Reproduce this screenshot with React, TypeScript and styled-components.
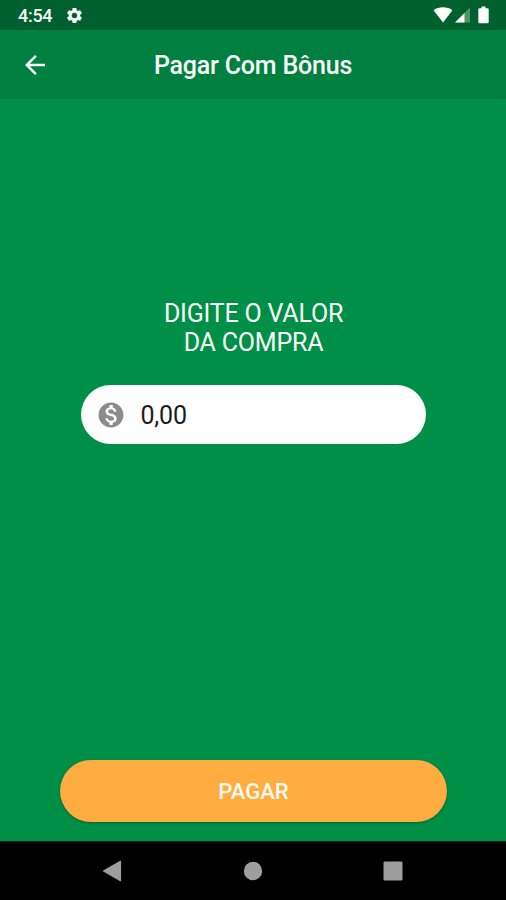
import React, { useState } from 'react';
import styled, { createGlobalStyle } from 'styled-components';
import { MdArrowBack, MdMonetizationOn, MdSettings } from 'react-icons/md';

const GlobalStyle = createGlobalStyle`
  *, *::before, *::after { box-sizing: border-box; }
  body { margin: 0; font-family: Roboto, "Liberation Sans", sans-serif; }
`;

const Screen = styled.div`
  display: flex;
  flex-direction: column;
  width: 506px;
  height: 900px;
  overflow: hidden;
  background: #008f47;
  color: #fafff8;
`;

const StatusBar = styled.div`
  display: flex;
  align-items: center;
  justify-content: space-between;
  height: 30px;
  padding: 2px 17px 0 18px;
  background: #00602f;
`;

const StatusGroup = styled.div`
  display: flex;
  align-items: center;
  gap: 13px;

  svg { display: block; margin-bottom: 2px; }
`;

const SystemIcons = styled.div`
  display: flex;
  align-items: center;
  padding-bottom: 2px;

  svg { display: block; margin-left: 2px; }
  svg:last-child { margin-left: 8px; }
`;

const Clock = styled.span`
  font-size: 18px;
  line-height: 22px;
  font-weight: 500;
  letter-spacing: -0.3px;
`;

const AppBar = styled.header`
  display: grid;
  grid-template-columns: 70px 1fr 70px;
  align-items: center;
  height: 69px;
  padding-top: 1px;
  border-bottom: 1px solid #007c3d;
  background: #008040;
`;

const BackButton = styled.button`
  display: flex;
  margin: 0;
  padding: 0 0 0 20px;
  border: 0;
  background: none;
  color: inherit;
`;

const Title = styled.h1`
  margin: 0;
  padding-top: 3px;
  text-align: center;
  white-space: nowrap;
  font-size: 25px;
  line-height: 30px;
  font-weight: 500;
  letter-spacing: -0.2px;
`;

const Content = styled.main`
  display: flex;
  flex: 1;
  flex-direction: column;
  align-items: center;
  padding: 200px 0 19px;
`;

const Prompt = styled.p`
  margin: 0 0 28px;
  padding: 1px 0 0 1px;
  text-align: center;
  font-size: 25px;
  line-height: 28.5px;
  letter-spacing: -0.2px;
`;

const Field = styled.label`
  display: flex;
  align-items: center;
  gap: 15px;
  width: 345px;
  height: 59px;
  padding: 0 15px;
  border-radius: 30px;
  background: #fff;
  color: #8c8c8c;

  svg { flex: none; }
`;

const AmountInput = styled.input`
  flex: 1;
  min-width: 0;
  padding: 2px 0 0;
  border: 0;
  outline: 0;
  background: none;
  color: #1c1c1c;
  font: 400 25px/30px Roboto, "Liberation Sans", sans-serif;
  letter-spacing: -0.2px;
`;

const PayButton = styled.button`
  width: 387px;
  height: 62px;
  margin-top: auto;
  padding: 0 0 1px 1px;
  border: 0;
  border-radius: 31px;
  background: #ffac41;
  box-shadow: 0 1px 3px rgba(0, 0, 0, 0.3);
  color: #fffaf0;
  font: 500 22.1px/28px Roboto, "Liberation Sans", sans-serif;
`;

const NavigationBar = styled.nav`
  display: flex;
  align-items: center;
  justify-content: space-between;
  height: 59px;
  padding: 0 103px 0 102px;
  border-top: 1px solid #002410;
  background: #000;
  color: #9e9e9e;

  svg { display: block; }
`;

function WifiIcon() {
  return (
    <svg width="20" height="16" viewBox="0 0 20 16">
      <path d="M0.5 3.2C6 -0.6 14 -0.6 19.5 3.2L10 15.5Z" fill="currentColor" />
    </svg>
  );
}

function SignalIcon() {
  return (
    <svg width="15" height="16" viewBox="0 0 15 16">
      <path d="M0 15.5L15 0.5V15.5Z" fill="#4d9468" />
      <path d="M0 15.5L9.5 6V15.5Z" fill="currentColor" />
    </svg>
  );
}

function BatteryIcon() {
  return (
    <svg width="11" height="18" viewBox="0 0 11 18">
      <path d="M3.5 0.5H7.5V2.3H9.5Q10.7 2.3 10.7 3.5V16Q10.7 17.2 9.5 17.2H1.5Q0.3 17.2 0.3 16V3.5Q0.3 2.3 1.5 2.3H3.5Z" fill="currentColor" />
    </svg>
  );
}

export default function App() {
  const [amount, setAmount] = useState('0,00');

  return (
    <>
      <GlobalStyle />
      <Screen>
        <StatusBar>
          <StatusGroup>
            <Clock>4:54</Clock>
            <MdSettings size={19} />
          </StatusGroup>
          <SystemIcons>
            <WifiIcon />
            <SignalIcon />
            <BatteryIcon />
          </SystemIcons>
        </StatusBar>
        <AppBar>
          <BackButton aria-label="Voltar">
            <MdArrowBack size={30} />
          </BackButton>
          <Title>Pagar Com Bônus</Title>
        </AppBar>
        <Content>
          <Prompt>
            DIGITE O VALOR
            <br />
            DA COMPRA
          </Prompt>
          <Field>
            <MdMonetizationOn size={30} />
            <AmountInput
              inputMode="decimal"
              value={amount}
              onChange={(event) => setAmount(event.target.value)}
            />
          </Field>
          <PayButton>PAGAR</PayButton>
        </Content>
        <NavigationBar>
          <svg width="20" height="22" viewBox="0 0 20 22">
            <path d="M1.5 11L18.5 1.3V20.7Z" fill="currentColor" stroke="currentColor" strokeWidth="1.2" strokeLinejoin="round" />
          </svg>
          <svg width="20" height="20" viewBox="0 0 20 20">
            <circle cx="10" cy="10" r="9.2" fill="currentColor" />
          </svg>
          <svg width="20" height="20" viewBox="0 0 20 20">
            <rect x="0.5" y="0.5" width="19" height="19" rx="1.3" fill="currentColor" />
          </svg>
        </NavigationBar>
      </Screen>
    </>
  );
}
